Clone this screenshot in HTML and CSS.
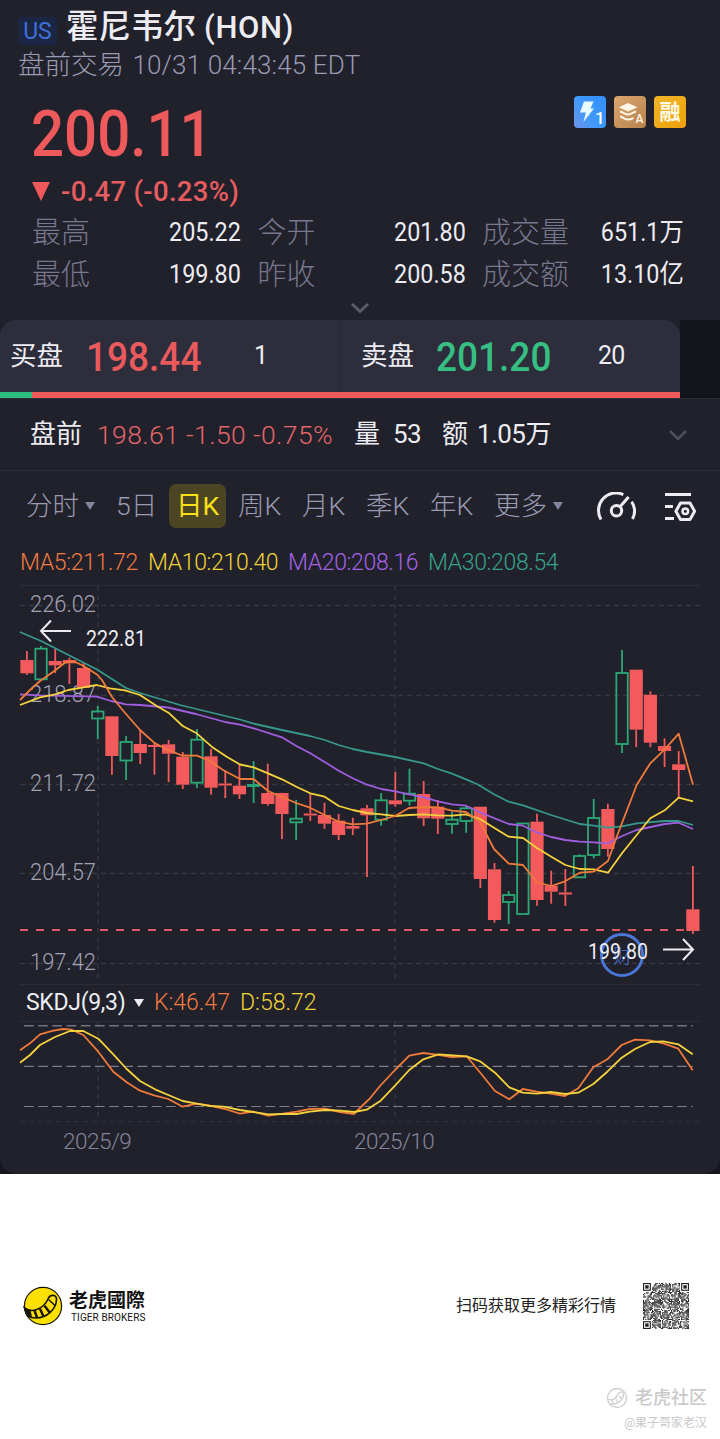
FILE: index.html
```html
<!DOCTYPE html>
<html lang="zh-CN">
<head>
    <meta charset="UTF-8">
    <meta name="viewport" content="width=device-width, initial-scale=1.0">
    <title>霍尼韦尔 (HON)</title>
    <link rel="stylesheet" href="styles.css">
</head>
<body>
    <div class="backdrop">
    <div class="panel">
        <!-- Title -->
        <div class="title-row">
            <span class="market">US</span>
            <h1>霍尼韦尔 <span class="ticker">(HON)</span></h1>
        </div>
        <div class="session">盘前交易 <span class="time">10/31 04:43:45 EDT</span></div>

        <!-- Last price -->
        <div class="price-row">
            <div class="price">200.11</div>
            <div class="badges">
                <svg width="32" height="32" viewBox="0 0 32 32">
                    <defs>
                        <linearGradient id="blue" x1="0" y1="1" x2="1" y2="0.3">
                            <stop offset="0" stop-color="#6f95ea"/>
                            <stop offset="0.5" stop-color="#4099fa"/>
                            <stop offset="1" stop-color="#3391fb"/>
                        </linearGradient>
                    </defs>
                    <rect width="32" height="32" rx="4" fill="url(#blue)"/>
                    <path d="M10 5.500h9.500l-3 7h3.500L9.500 26l2.300-9.500H6z" fill="#e8fbff"/>
                    <text x="21" y="28" class="badge-num">1</text>
                </svg>
                <svg width="32" height="32" viewBox="0 0 32 32">
                    <defs>
                        <linearGradient id="bronze" x1="0" y1="0" x2="1" y2="1">
                            <stop offset="0" stop-color="#dba66f"/>
                            <stop offset="1" stop-color="#b9824c"/>
                        </linearGradient>
                    </defs>
                    <rect width="32" height="32" rx="4" fill="url(#bronze)"/>
                    <path d="M14 7l9.500 4.300L14 15.600 4.800 11.300z" fill="#fff6e8"/>
                    <path d="M6 15.500c3 .4 5 3 8 3s5-2.600 8-3M6 20.500c3 .4 5 3 8 3s4-.8 5.500-1.700" fill="none" stroke="#fff6e8" stroke-width="2"/>
                    <text x="21.500" y="26.500" class="badge-a">A</text>
                </svg>
                <span class="badge-rong">融</span>
            </div>
        </div>
        <div class="change"><span class="down"></span>-0.47 (-0.23%)</div>

        <!-- Day stats -->
        <div class="stats">
            <div class="stat"><span>最高</span><b>205.22</b></div>
            <div class="stat"><span>今开</span><b>201.80</b></div>
            <div class="stat"><span>成交量</span><b>651.1<i>万</i></b></div>
            <div class="stat"><span>最低</span><b>199.80</b></div>
            <div class="stat"><span>昨收</span><b>200.58</b></div>
            <div class="stat"><span>成交额</span><b>13.10<i>亿</i></b></div>
        </div>
        <div class="expand">
            <svg width="20" height="12" viewBox="0 0 20 12"><path d="M2 2l8 7.500L18 2" fill="none" stroke="#5b5b66" stroke-width="3"/></svg>
        </div>

        <!-- Bid / ask -->
        <div class="book">
            <div class="quotes">
                <div class="quote bid"><span>买盘</span><b>198.44</b><em>1</em></div>
                <div class="quote ask"><span>卖盘</span><b>201.20</b><em>20</em></div>
            </div>
            <div class="ratio"><div class="ratio-bid"></div></div>
        </div>

        <div class="premarket">
            <span class="pre-label">盘前</span>
            <span class="pre-price">198.61 -1.50 -0.75%</span>
            <span class="pre-vol">量</span><span class="pre-num">53</span>
            <span class="pre-amt">额</span><span class="pre-num2">1.05<i>万</i></span>
            <svg class="pre-more" width="20" height="12" viewBox="0 0 20 12"><path d="M2 2l8 8L18 2" fill="none" stroke="#50505c" stroke-width="2.500"/></svg>
        </div>

        <!-- Period tabs -->
        <div class="tabs">
            <span class="tab t1">分时<i class="caret"></i></span>
            <span class="tab t2">5日</span>
            <span class="tab t3 active">日K</span>
            <span class="tab t4">周K</span>
            <span class="tab t5">月K</span>
            <span class="tab t6">季K</span>
            <span class="tab t7">年K</span>
            <span class="tab t8">更多<i class="caret"></i></span>
            <svg class="tool-speed" width="40" height="32" viewBox="0 0 40 32">
                <g fill="none" stroke="#ececf2" stroke-width="3">
                    <path d="M5 27.500A17.500 17.500 0 0 1 27.300 2.600M35.700 9.700a17.500 17.500 0 0 1 .8 17.300"/>
                    <circle cx="20.500" cy="18.700" r="5.200"/>
                    <path d="M24.200 14.500L32.600 5"/>
                </g>
            </svg>
            <svg class="tool-set" width="34" height="32" viewBox="0 1 34 32">
                <g fill="none" stroke="#ececf2" stroke-width="3">
                    <path d="M2 3.500h26M2 15.500h8M2 27.500h9"/>
                    <path d="M17.500 12h9.500l4.600 8.300-4.600 8.300h-9.500l-4.600-8.300z" stroke-linejoin="round"/>
                    <circle cx="22.300" cy="20.300" r="2.800" stroke-width="2.500"/>
                </g>
            </svg>
        </div>

        <div class="ma-legend">
            <span class="ma5">MA5:211.72</span>
            <span class="ma10">MA10:210.40</span>
            <span class="ma20">MA20:208.16</span>
            <span class="ma30">MA30:208.54</span>
        </div>

        <svg id="kline" class="chart" width="720" height="400" viewBox="0 585 720 400"></svg>

        <div class="skdj-legend">
            <span class="skdj-name">SKDJ(9,3)</span><i class="caret white"></i>
            <span class="k">K:46.47</span>
            <span class="d">D:58.72</span>
        </div>
        <svg id="skdj" class="chart" width="720" height="102" viewBox="0 1021 720 102"></svg>
        <div class="dates"><span>2025/9</span><span>2025/10</span></div>
    </div>
    </div>

    <!-- Brand footer -->
    <div class="footer">
        <svg class="logo" width="40" height="40" viewBox="0 0 40 40">
            <circle cx="20" cy="20" r="18.600" fill="#fbe000" stroke="#17140a" stroke-width="1.200"/>
            <path d="M1.500 22C8 27 20 24 25 13c2-5 9-5 8.500 1C33 23 24 32 13 32c-4 0-7-1-9-3z" fill="#fbe000" stroke="#17140a" stroke-width="1.600"/>
            <path d="M1.500 21.500l6 2.500 1.500 7.500-4.500-2z" fill="#17140a"/>
            <path d="M11.500 24.500l2.500 7M17 22.800l3.500 7.700M21.500 19.800l5 6.500" stroke="#17140a" stroke-width="2.500" fill="none"/>
            <path d="M25.500 13.500l6.500 6" stroke="#17140a" stroke-width="1.500" fill="none"/>
        </svg>
        <div class="brand">
            <div class="brand-cn">老虎國際</div>
            <div class="brand-en">TIGER BROKERS</div>
        </div>
        <div class="scan">扫码获取更多精彩行情</div>
        <canvas id="qr" class="qr" width="46" height="46"></canvas>
    </div>

    <div class="watermark">
        <div class="wm-name">
            <svg width="22" height="22" viewBox="0 0 22 22">
                <g fill="none" stroke="#cfcfcf">
                    <circle cx="11" cy="11" r="9.500" stroke-width="1.300"/>
                    <path d="M2 12c4 2 8 0 10-5 1.500-3 6-3 5.500.5C17 13 12 18 5 17M6 13l1 4M10 12l2 4M13 9l3 3" stroke-width="1.300"/>
                </g>
            </svg>
            老虎社区
        </div>
        <div class="wm-user">@果子哥家老汉</div>
    </div>

    <script src="chart.js"></script>
</body>
</html>
```
FILE: styles.css
```css
* {
    box-sizing: border-box;
}
body {
    margin: 0;
    background: #fff;
    font-family: Roboto, "Noto Sans CJK SC", sans-serif;
    line-height: 1.2;
    white-space: nowrap;
}
i, em {
    font-style: normal;
}
b {
    font-weight: 400;
}
.backdrop {
    background: #15151d;
}
.panel {
    height: 1174px;
    background: #21212b;
    border-radius: 0 0 16px 16px;
    overflow: hidden;
    color: #ececf2;
}
.title-row {
    display: flex;
    align-items: center;
    height: 48px;
    padding: 6px 0 0 18px;
}
.market {
    width: 39px;
    height: 28px;
    margin-top: 7px;
    background: #1b2645;
    color: #3f6fd8;
    font-size: 23px;
    line-height: 29px;
    text-align: center;
    border-radius: 3px;
}
h1 {
    margin: 0 0 0 9px;
    font-size: 32.5px;
    font-weight: 500;
    line-height: 44px;
}
.ticker {
    font-size: 31px;
    letter-spacing: 0.6px;
}
.session {
    height: 34px;
    padding-left: 18px;
    font-size: 26.5px;
    font-weight: 300;
    line-height: 34px;
    color: #9a9ab2;
}
.time {
    font-size: 26px;
    letter-spacing: 0.15px;
    margin-left: 2px;
}
.price-row {
    display: flex;
    justify-content: space-between;
    height: 90px;
    padding: 14px 34px 0 31px;
}
.price {
    font-size: 64px;
    font-weight: 500;
    line-height: 78px;
    color: #ee5a5c;
    transform: scaleX(0.91);
    transform-origin: left;
}
.badges {
    display: flex;
    gap: 8px;
}
.badge-num {
    font-size: 17px;
    font-weight: 500;
    fill: #fff;
}
.badge-a {
    font-size: 12px;
    font-weight: 500;
    fill: #fff6e8;
}
.badge-rong {
    width: 32px;
    height: 32px;
    border-radius: 4px;
    background: linear-gradient(135deg, #f0b52b, #eea008);
    font-size: 21px;
    font-weight: 700;
    line-height: 33px;
    text-align: center;
    color: #fffbe8;
}
.change {
    display: flex;
    align-items: center;
    height: 38px;
    margin-bottom: 2px;
    padding-left: 32px;
    font-size: 27.5px;
    font-weight: 500;
    letter-spacing: 0.3px;
    color: #e65c60;
}
.down {
    border: 9px solid transparent;
    border-top: 19px solid #ee5a5c;
    border-bottom: 0;
    margin-right: 11px;
}
.stats {
    display: grid;
    grid-template-columns: 209px 208px 202px;
    grid-auto-rows: 42px;
    column-gap: 16.5px;
    padding-left: 32px;
}
.stat {
    display: flex;
    justify-content: space-between;
    align-items: center;
    font-size: 29px;
    font-weight: 300;
    color: #77778e;
}
.stat b {
    font-size: 25px;
    color: #ececf2;
    transform: scaleX(0.935);
    transform-origin: right;
}
.stat b i {
    font-size: 26px;
}
.expand {
    display: flex;
    justify-content: center;
    align-items: center;
    height: 24px;
}
.book {
    height: 79px;
    background: linear-gradient(90deg, #21212b 680px, #14141c 680px);
    padding-right: 40px;
    border-bottom: 1px solid #2c2c35;
}
.quotes {
    display: flex;
    height: 72px;
    background: #2d2d3c;
    border-radius: 16px 16px 0 0;
}
.quote {
    display: grid;
    grid-template-columns: 76px 168px 60px;
    align-items: center;
    width: 340px;
    padding-left: 10px;
}
.quote.ask {
    grid-template-columns: 75px 162px 60px;
    padding-left: 20px;
    border-left: 1px solid #292937;
}
.quote span {
    font-size: 26.5px;
}
.quote b {
    font-size: 40px;
    font-weight: 500;
    padding-top: 4px;
    transform: scaleX(0.925);
    transform-origin: left;
}
.quote em {
    font-size: 25px;
    letter-spacing: -0.8px;
}
.bid b {
    color: #ea5a5d;
}
.ask b {
    color: #36bf82;
}
.ratio {
    height: 6px;
    background: #ee5a5c;
}
.ratio-bid {
    width: 32px;
    height: 6px;
    background: #2ebd80;
}
.premarket {
    display: flex;
    align-items: center;
    height: 72px;
    padding: 0 32px 0 30px;
    border-bottom: 1px solid #2c2c35;
    font-size: 26px;
}
.pre-price {
    width: 241px;
    margin-left: 15px;
    font-size: 26.5px;
    font-weight: 300;
    letter-spacing: 0.4px;
    color: #e5656a;
}
.pre-vol {
    margin: 0 13px 0 16px;
}
.pre-num, .pre-num2 {
    letter-spacing: -0.6px;
}
.pre-amt {
    margin: 0 9px 0 21px;
}
.pre-more {
    margin-left: auto;
}
.tabs {
    display: flex;
    align-items: center;
    height: 70px;
    padding-left: 26px;
    font-size: 26.5px;
    font-weight: 300;
    color: #9a9ab2;
}
.tab {
    display: flex;
    align-items: center;
}
.caret {
    border: 5.5px solid transparent;
    border-top: 8px solid #84849c;
    border-bottom: 0;
    margin-left: 6px;
}
.t1 { width: 90px; }
.t2 { width: 53px; }
.tab.active {
    justify-content: center;
    width: 57px;
    height: 44px;
    border-radius: 7px;
    background: #4b4523;
    color: #f8df17;
    font-weight: 400;
}
.t4 { width: 64px; margin-left: 12px; }
.t5 { width: 64px; }
.t6 { width: 64px; }
.t7 { width: 64px; }
.t8 { width: 102px; }
.tool-speed {
    margin-top: 4px;
}
.tool-set {
    margin: 4px 0 0 27px;
}
.ma-legend {
    display: flex;
    align-items: center;
    height: 44px;
    padding-left: 20px;
    font-size: 23px;
    font-weight: 300;
    letter-spacing: -0.35px;
}
.ma-legend span {
    width: 140px;
}
.ma-legend .ma5 {
    width: 128px;
}
.ma5, .k { color: #f07a40; }
.ma10, .d { color: #f0d434; }
.ma20 { color: #a561e6; }
.ma30 { color: #36a28c; }
.chart {
    display: block;
}
.axis {
    font-size: 23px;
    font-weight: 300;
    fill: #a2a2b6;
}
.mark {
    font-size: 22px;
    fill: #ececf2;
}
.event {
    font-size: 19px;
    font-weight: 300;
    fill: #4a76d6;
}
.skdj-legend {
    display: flex;
    align-items: center;
    height: 36px;
    padding-left: 26px;
    font-size: 23px;
    font-weight: 300;
}
.skdj-name {
    width: 102px;
    font-weight: 400;
    letter-spacing: -0.3px;
}
.caret.white {
    border-top-color: #ececf2;
}
.skdj-legend .k {
    width: 86px;
    margin-left: 10px;
}
.dates {
    display: flex;
    height: 36px;
    padding-left: 63px;
    font-size: 22.5px;
    font-weight: 300;
    letter-spacing: -0.5px;
    line-height: 36px;
    color: #848498;
}
.dates span {
    width: 291px;
}
.footer {
    display: flex;
    align-items: center;
    height: 48px;
    margin-top: 108px;
    padding: 0 31px 0 23px;
    color: #111;
}
.brand {
    margin: 2px 0 0 6px;
}
.brand-cn {
    font-size: 19px;
    font-weight: 700;
    line-height: 22px;
}
.brand-en {
    font-size: 10px;
    line-height: 12px;
    letter-spacing: 0.1px;
    padding-left: 2px;
}
.scan {
    margin-left: auto;
    font-size: 16px;
    color: #222;
}
.qr {
    margin-left: 27px;
}
.watermark {
    display: flex;
    flex-direction: column;
    align-items: flex-end;
    margin-top: 54px;
    padding-right: 13px;
    color: #c9c9c9;
}
.wm-name {
    display: flex;
    align-items: center;
    gap: 7px;
    height: 28px;
    font-size: 18px;
    font-weight: 500;
}
.wm-user {
    font-size: 12px;
    line-height: 22px;
}
```
FILE: chart.js
```javascript
const colors = {
    up: '#2aa876',
    down: '#f25a5b',
    grid: '#383843',
    ma5: '#f07a3a',
    ma10: '#f5d23c',
    ma20: '#a05ee0',
    ma30: '#36988c'
};

// wick top, body top, body bottom, wick bottom, rising
const candles = [
    [651, 660, 673.3, 675, 0], [646, 648.7, 679.3, 680, 1], [648, 661, 665.3, 673, 0],
    [657.7, 660, 663.3, 684, 0], [662, 668, 688, 688, 0], [706, 711.5, 718.5, 739, 1],
    [716, 716.3, 756, 774.7, 0], [736, 742, 760.5, 780, 1], [730, 744, 753, 764, 0],
    [742, 745, 747, 774.7, 0], [740, 744.3, 753.7, 782, 0], [752, 756.7, 784.7, 789, 0],
    [729, 739.7, 782.7, 788, 1], [749, 756.3, 787.7, 794.7, 0], [770.7, 783.5, 785.5, 798, 0],
    [765, 785.7, 794.3, 799, 0], [761, 785, 786, 803, 1], [763.7, 793, 804, 805.7, 0],
    [792.7, 793, 814, 839, 0], [800, 818.7, 822.3, 840, 1], [794, 813.5, 815.5, 821, 0],
    [802.7, 815, 823.7, 828.7, 0], [814, 820.7, 835, 840, 0], [817.7, 826, 828.7, 835, 0],
    [805, 808.3, 815.3, 877, 0], [793, 800.3, 819.7, 825.7, 1], [771.7, 800.3, 804.3, 806.7, 0],
    [768.7, 793.7, 800.7, 805.7, 1], [781, 794, 818.3, 826, 0], [800, 806.7, 818.7, 834, 0],
    [811.7, 819.7, 824, 833.7, 1], [806, 808.3, 821, 832.7, 1], [806.7, 806.7, 879, 888, 0],
    [863, 869.3, 920, 922.7, 0], [891, 895, 902, 924, 1], [823.5, 823.5, 914, 914, 1],
    [813.7, 821.7, 900, 905.7, 0], [870.7, 885.7, 891.7, 903.7, 0], [869, 892.5, 894.5, 906, 0],
    [854.3, 856, 877.3, 878, 1], [799, 818, 855, 858.3, 1], [803.7, 809, 849, 856.7, 0],
    [650, 673, 744, 753, 1], [669.7, 669.7, 729.7, 747, 0], [691.3, 694.7, 742.7, 747.3, 0],
    [738.3, 746, 751, 767, 0], [751, 764.3, 770, 798.3, 0], [866, 909.3, 931, 934, 0]
];

const ma = {
    ma30: '20,632 41,641 97,669.5 126,688 140,693 180,705 240,719.5 253.7,723.7 282,730 310,736 324.7,740 338.7,745 352.7,749 367,752 395,757 423.7,763.3 438,769 452,773.7 466,779.3 477,784 494,794.3 508.7,801.7 523,805.3 551,815 579.7,824 593.7,825.7 608,827.7 622,826.3 636.7,823.3 664.7,821 678.7,821 693,825',
    ma20: '20,694.3 40,695.3 97,696.7 111,701 126,704.3 140,705 168,707.5 196,714 225,722 240,724.7 253.7,728.3 282,737.3 296.3,746 310.3,753.3 324.7,762 338.7,770.7 352.7,778.3 367,784.7 381.3,789 395.3,791.3 409.3,794.3 423.7,797.3 438,801.3 452,804.3 466,805.7 480,812.3 508.7,824 523,825.7 537.3,832.7 551.3,837 565.3,840 579.7,841.7 593.7,842.3 608,843.3 622,836 636.7,830 664.7,824 678.7,822.7 693,829',
    ma10: '20,705 40,697.3 55,694.3 68.3,690 83.3,687.3 96.7,685 110,688.3 125,690.3 140,695 156.7,706 169.3,713.3 182.7,726 196.7,733.3 211.7,746.7 226.7,756.7 240,764.5 253.7,767.3 268,773.3 282,779.3 296.3,786.7 310.3,793.3 324.7,796.7 338.7,806 352.7,810 367,813 381.3,814.3 395.3,816 409.3,815 423.7,814.3 438,815.3 452,815.7 466,814.3 480,819 494,827.7 508.7,836.7 523,838 537.3,848.3 551.3,856.7 565.3,865 579.7,869 593.7,869.3 608,872.7 622,853.3 636.7,835 650.3,818.3 664.7,810.3 678.7,797.7 693,801.3',
    ma5: '20,700 30,690 40,681 53.3,671.7 65,662.7 75,661.7 83.5,666 97,674.5 102,680 112,697 123,710.5 140,730 155,743.3 168,750 182,755.5 197,755.7 210,761 223,770 240,779 253.6,779 268,791 282,797 296,803 310,807.7 324.7,815 338.7,821.7 352.7,824.3 367,823.7 381,820 395,816 409,808 424,807 438,807.3 452,810.7 466,812 480,822 494,849 508.7,863.7 523,865 537,882.3 551.3,886 565,881.3 579.7,872.7 593.7,871.7 608,861 616.7,836.7 636.7,785 650.3,763.3 664.7,749.3 678.7,733.7 693,784.7'
};

function line(x1, y1, x2, y2, color, width, dash) {
    return `<line x1="${x1}" y1="${y1}" x2="${x2}" y2="${y2}" stroke="${color}" stroke-width="${width}"${dash ? ` stroke-dasharray="${dash}"` : ''}/>`;
}

function polyline(points, color) {
    return `<polyline points="${points}" fill="none" stroke="${color}" stroke-width="1.8" stroke-linejoin="round"/>`;
}

function label(x, y, width, cls, text) {
    return `<text x="${x}" y="${y}" textLength="${width}" lengthAdjust="spacingAndGlyphs" class="${cls}">${text}</text>`;
}

function drawKline() {
    let out = line(20, 585.5, 700, 585.5, '#2c2c35', 1) + line(20, 984.5, 700, 984.5, '#2c2c35', 1);

    // Grid
    [605.5, 695.5, 784.5, 873.5, 963.5].forEach(y => {
        out += line(20, y, 700, y, colors.grid, 1.3, '5 4');
    });
    [98, 395].forEach(x => {
        out += line(x, 586, x, 980, colors.grid, 1.3, '5 4');
    });
    out += label(30, 612, 66, 'axis', '226.02');
    out += label(30, 702, 66, 'axis', '218.87');
    out += label(30, 791, 66, 'axis', '211.72');
    out += label(30, 880, 66, 'axis', '204.57');
    out += label(30, 970, 66, 'axis', '197.42');

    // Last price
    out += line(20, 930, 686, 930, '#dc5a5f', 1.8, '8 8');

    candles.forEach(([high, top, bottom, low, rising], i) => {
        const x = 26.9 + i * 14.17;
        const color = rising ? colors.up : colors.down;
        out += line(x, high, x, top, color, 1.8) + line(x, bottom, x, low, color, 1.8);
        if (rising) {
            out += `<rect x="${x - 5.7}" y="${top}" width="11.4" height="${bottom - top}" fill="none" stroke="${color}" stroke-width="1.8"/>`;
        } else {
            out += `<rect x="${x - 6.6}" y="${top}" width="13.2" height="${bottom - top}" fill="${color}"/>`;
        }
    });

    Object.keys(ma).forEach(key => {
        out += polyline(ma[key], colors[key]);
    });

    // High / low markers
    out += '<path d="M71 631H41M51 620.500L41 631l10 10.500" fill="none" stroke="#ececf2" stroke-width="2"/>';
    out += label(86, 646, 60, 'mark', '222.81');
    out += '<circle cx="622" cy="955" r="20.500" fill="none" stroke="#4a76d6" stroke-width="3"/>';
    out += '<text x="613" y="963" class="event">财</text>';
    out += label(588, 959, 60, 'mark', '199.80');
    out += '<path d="M663 949.500h30M683 939l10 10.500-10 10.500" fill="none" stroke="#ececf2" stroke-width="2"/>';
    document.getElementById('kline').innerHTML = out;
}

function drawSkdj() {
    let out = line(20, 1021.5, 700, 1021.5, '#2c2c35', 1);
    out += line(20, 1121.5, 700, 1121.5, '#30303a', 1, '5 4');
    [98, 395].forEach(x => {
        out += line(x, 1022, x, 1117, colors.grid, 1.3, '5 4');
    });
    out += line(24, 1025.7, 693, 1025.7, '#73737f', 1.4, '9.6 4.6');
    out += line(24, 1066.3, 693, 1066.3, '#7e7e8a', 1.2, '9.6 4.6');
    out += line(24, 1106.5, 693, 1106.5, '#7e7e8a', 1.2, '9.6 4.6');
    out += polyline('20,1050.3 30,1043.3 40,1034.3 53.3,1030.7 63.3,1029 71.7,1029.7 83.3,1035 98.3,1051.7 113.3,1071.7 126.7,1082.3 140,1090.7 155,1095.7 168.3,1099 182.7,1106.7 196.7,1103.7 210,1105.7 225,1109 240,1113.7 253.3,1111.7 268.3,1115.7 283.3,1113.7 296.7,1111.7 310,1109 325,1108.7 340,1112 354,1114 361,1107 370,1098.3 380,1086 395,1070 409.3,1055.7 423.3,1053 436.7,1054.7 451.7,1057 466.7,1056.3 480.7,1073.3 495,1091 509.3,1099.3 522.7,1089 536.7,1091.7 550.7,1093.7 565,1096 578.3,1088.3 593.3,1067.3 607.3,1059.3 621.7,1045 635,1039.7 650,1040.3 663.3,1043.3 678.3,1048.7 692.7,1070.3', colors.ma5);
    out += polyline('20,1062.7 30,1055 40,1045 55,1037 70,1031 83.3,1031 98.3,1038.7 113.3,1054.3 126.7,1069 140,1081 155,1089.3 168.3,1095 182.7,1101 196.7,1103.7 210,1106 223.3,1106.7 240,1110 253.3,1112 268.3,1114.3 283.3,1114 296.7,1114 310,1111.7 325,1110 340,1110.7 354,1112 366.7,1109.7 380.7,1100.7 395,1085.7 409.3,1070 423.3,1059.3 438.3,1054.3 453.3,1055.3 466.7,1056.3 480.7,1061.7 495,1072.7 509.3,1087.3 522.7,1092.7 536.7,1093.7 550.7,1092 565,1094 578.3,1092.7 593.3,1084 607.3,1071.7 621.7,1057.7 635,1049 650,1042 663.3,1041.3 678.3,1044.3 692.7,1054.3', colors.ma10);
    document.getElementById('skdj').innerHTML = out;
}

function drawQr() {
    const ctx = document.getElementById('qr').getContext('2d');
    const n = 41;
    const size = 46 / n;
    let seed = 7;
    ctx.fillStyle = '#222';
    for (let r = 0; r < n; r++) {
        for (let c = 0; c < n; c++) {
            seed = (seed * 16807) % 2147483647;
            if (seed % 100 < 58) {
                ctx.fillRect(c * size, r * size, size, size);
            }
        }
    }

    // Finder patterns
    [[0, 0], [n - 7, 0], [0, n - 7]].forEach(([c, r]) => {
        ctx.fillStyle = '#fff';
        ctx.fillRect((c - 1) * size, (r - 1) * size, size * 9, size * 9);
        ctx.fillStyle = '#222';
        ctx.fillRect(c * size, r * size, size * 7, size * 7);
        ctx.fillStyle = '#fff';
        ctx.fillRect((c + 1) * size, (r + 1) * size, size * 5, size * 5);
        ctx.fillStyle = '#222';
        ctx.fillRect((c + 2) * size, (r + 2) * size, size * 3, size * 3);
    });
}

drawKline();
drawSkdj();
drawQr();
```
